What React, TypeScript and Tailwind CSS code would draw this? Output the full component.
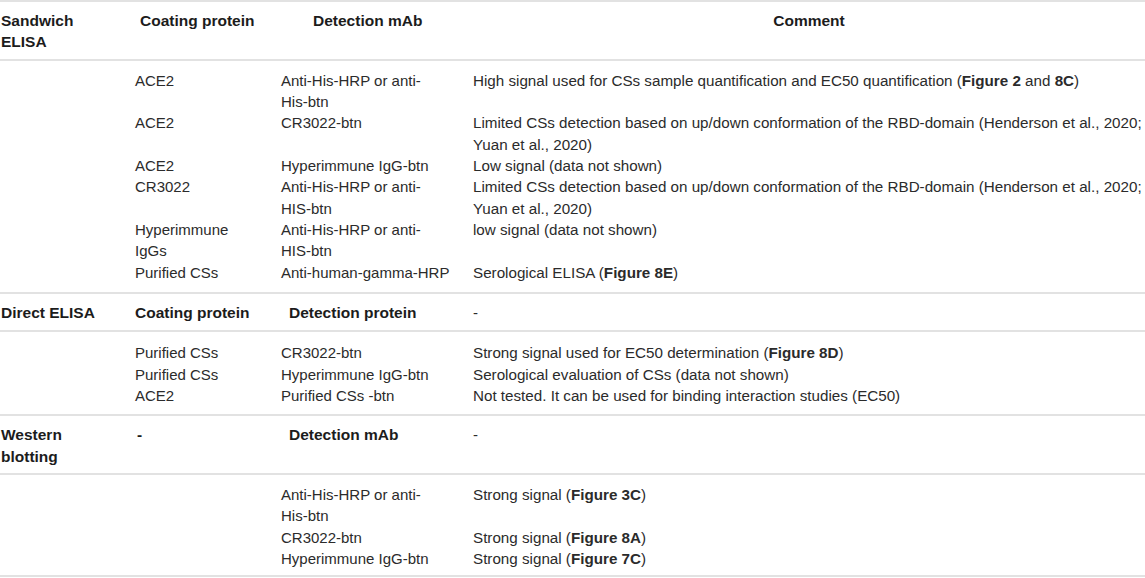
import React from 'react';

type Row = [React.ReactNode, React.ReactNode, React.ReactNode, React.ReactNode];

const cols = 'grid grid-cols-[135px_146px_192px_1fr]';
const cell = 'whitespace-pre-line text-[15px] leading-[21.33px] text-[#2b2b2b]';
const note = 'whitespace-nowrap text-[15.2px] leading-[21.33px] text-[#2b2b2b]';

const limited = (
    <>
        Limited CSs detection based on up/down conformation of the RBD-domain (Henderson et al., 2020;
        <br />
        Yuan et al., 2020)
    </>
);

const sandwichRows: Row[] = [
    ['', 'ACE2', 'Anti-His-HRP or anti-\nHis-btn', <>High signal used for CSs sample quantification and EC50 quantification (<b>Figure 2</b> and <b>8C</b>)</>],
    ['', 'ACE2', 'CR3022-btn', limited],
    ['', 'ACE2', 'Hyperimmune IgG-btn', 'Low signal (data not shown)'],
    ['', 'CR3022', 'Anti-His-HRP or anti-\nHIS-btn', limited],
    ['', 'Hyperimmune\nIgGs', 'Anti-His-HRP or anti-\nHIS-btn', 'low signal (data not shown)'],
    ['', 'Purified CSs', 'Anti-human-gamma-HRP', <>Serological ELISA (<b>Figure 8E</b>)</>],
];

const directRows: Row[] = [
    ['', 'Purified CSs', 'CR3022-btn', <>Strong signal used for EC50 determination (<b>Figure 8D</b>)</>],
    ['', 'Purified CSs', 'Hyperimmune IgG-btn', 'Serological evaluation of CSs (data not shown)'],
    ['', 'ACE2', 'Purified CSs -btn', 'Not tested. It can be used for binding interaction studies (EC50)'],
];

const westernRows: Row[] = [
    ['', '', 'Anti-His-HRP or anti-\nHis-btn', <>Strong signal (<b>Figure 3C</b>)</>],
    ['', '', 'CR3022-btn', <>Strong signal (<b>Figure 8A</b>)</>],
    ['', '', 'Hyperimmune IgG-btn', <>Strong signal (<b>Figure 7C</b>)</>],
];

const Body = ({ rows, pad = 'pt-[9px] pb-[9px]' }: { rows: Row[]; pad?: string }) => (
    <div className={`${cols} border-b-2 border-[#e2e2e2] ${pad}`}>
        {rows.map((r, i) => (
            <React.Fragment key={i}>
                <div className={cell}>{r[0]}</div>
                <div className={cell}>{r[1]}</div>
                <div className={cell}>{r[2]}</div>
                <div className={note}>{r[3]}</div>
            </React.Fragment>
        ))}
    </div>
);

const head = 'whitespace-pre-line text-[15.5px] font-bold leading-[21.33px] text-[#1c1c1c]';
const dash = 'text-[15px] leading-[21.33px] text-[#2b2b2b]';

export default function App() {
    return (
        <div className="w-[1145px] h-[578px] overflow-hidden bg-white font-['Liberation_Sans',Arial,sans-serif] border-t-2 border-[#e2e2e2]">
            <div className={`${cols} border-b-2 border-[#e2e2e2] pt-[8px] pb-[6px]`}>
                <div className={`${head} pl-px`}>{'Sandwich\nELISA'}</div>
                <div className={`${head} pl-[5px]`}>Coating protein</div>
                <div className={`${head} pl-[32px]`}>Detection mAb</div>
                <div className={`${head} text-center`}>Comment</div>
            </div>
            <Body rows={sandwichRows} />

            <div className={`${cols} border-b-2 border-[#e2e2e2] pt-[8px] pb-[7px]`}>
                <div className={`${head} pl-px`}>Direct ELISA</div>
                <div className={head}>Coating protein</div>
                <div className={`${head} pl-[8px]`}>Detection protein</div>
                <div className={dash}>-</div>
            </div>
            <Body rows={directRows} pad="pt-[10px] pb-[8px]" />

            <div className={`${cols} border-b-2 border-[#e2e2e2] pt-[8px] pb-[6px]`}>
                <div className={`${head} pl-px`}>{'Western\nblotting'}</div>
                <div className={`${head} pl-[2px]`}>-</div>
                <div className={`${head} pl-[8px]`}>Detection mAb</div>
                <div className={dash}>-</div>
            </div>
            <Body rows={westernRows} pad="pt-[9px] pb-[6px]" />
        </div>
    );
}
